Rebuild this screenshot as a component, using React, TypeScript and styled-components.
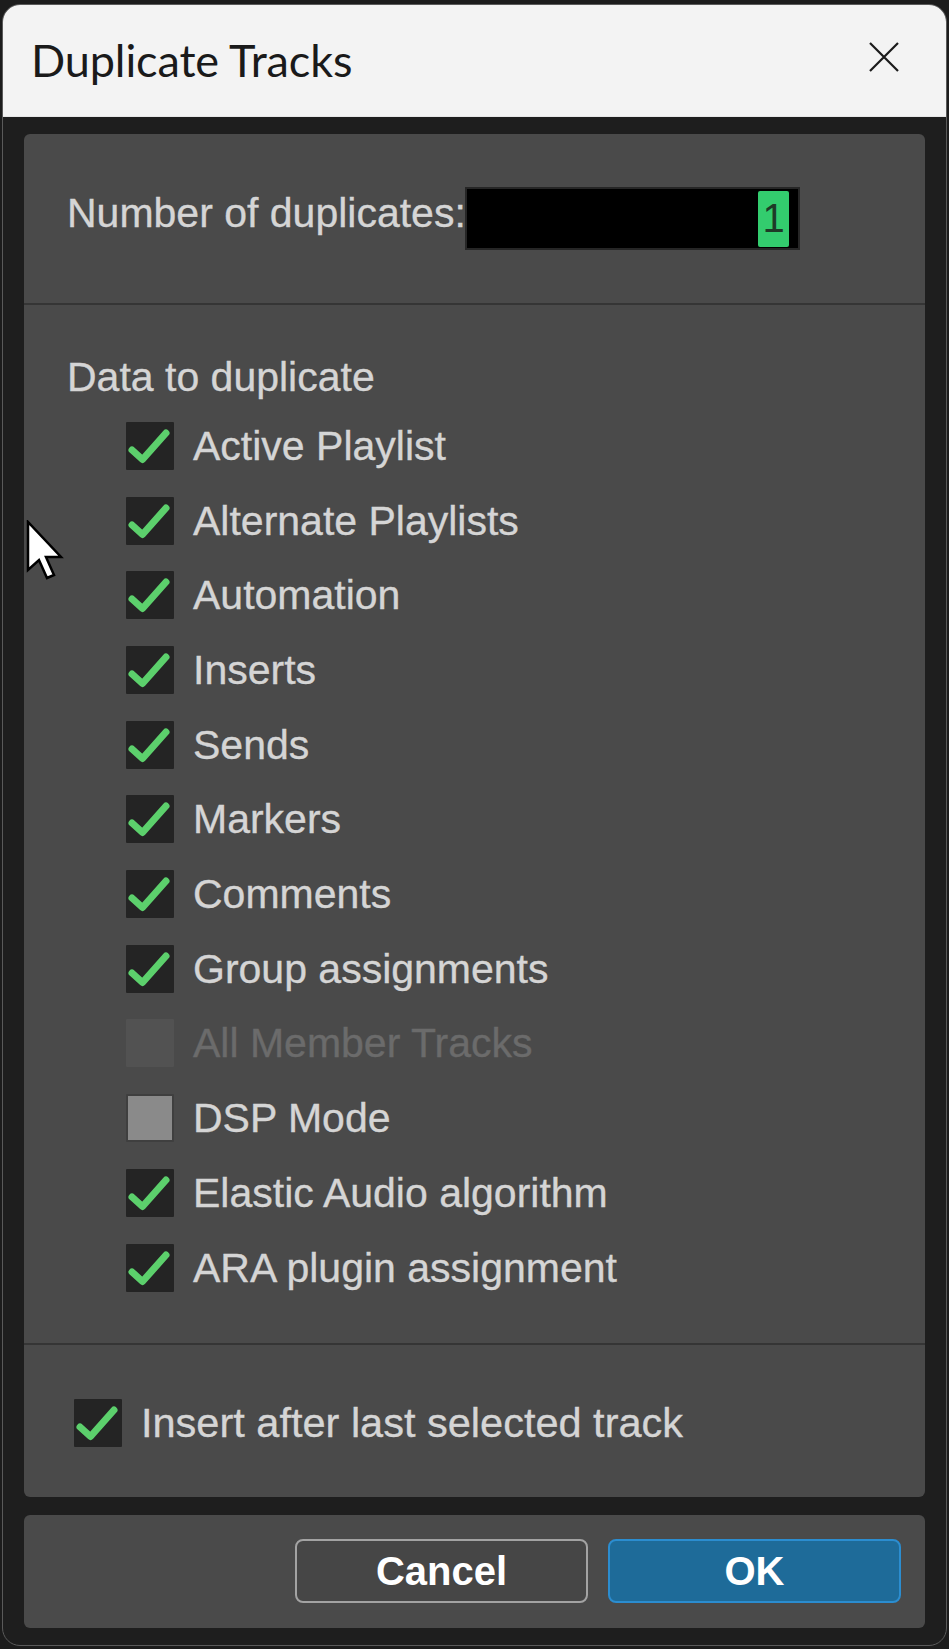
import React from "react";
import styled, { createGlobalStyle } from "styled-components";

const Global = createGlobalStyle`
  html, body { margin: 0; padding: 0; background: #1c1c1c; }
  body { width: 949px; height: 1649px; overflow: hidden; }
  #root { width: 949px; }
`;

const Window = styled.div`
  position: relative;
  margin: 4px 0 0 2px;
  width: 943px;
  border: 1px solid #5a5a5a;
  border-radius: 18px;
  overflow: hidden;
  background: #1e1e1e;
  font-family: "Liberation Sans", Arial, sans-serif;
`;

const TitleBar = styled.div`
  height: 112px;
  background: #f3f3f3;
  display: flex;
  align-items: center;
  justify-content: space-between;
  padding: 0 47px 0 28px;
  border-bottom: 1px solid #e6e6e6;
  box-sizing: border-box;
`;

const Title = styled.div`
  font-family: Lato, "Noto Sans", sans-serif;
  font-size: 45px;
  color: #1a1a1a;
  letter-spacing: -0.1px;
  margin-bottom: 2px;
`;

const CloseButton = styled.div`
  width: 30px;
  height: 30px;
  margin-bottom: 8px;
  display: flex;
`;

const Content = styled.div`
  padding: 17px 21px 17px 21px;
  display: flex;
  flex-direction: column;
  gap: 18px;
`;

const Panel = styled.div`
  background: #4a4a4a;
  border-radius: 6px;
  display: flex;
  flex-direction: column;
  overflow: hidden;
`;

const Section = styled.div<{ $h?: number }>`
  ${(p) => (p.$h ? `height: ${p.$h}px;` : "")}
  box-sizing: border-box;
  & + & { border-top: 2px solid #353535; }
`;

const NumberSection = styled(Section)`
  display: flex;
  align-items: center;
  padding-left: 43px;
`;

const Label = styled.span<{ $size?: number; $disabled?: boolean }>`
  font-size: ${(p) => p.$size ?? 41}px;
  line-height: 46px;
  color: ${(p) => (p.$disabled ? "#6b6b6b" : "#d5d5d5")};
  -webkit-text-stroke: 0.35px ${(p) => (p.$disabled ? "#6b6b6b" : "#d5d5d5")};
  white-space: nowrap;
`;

const NumberLabel = styled(Label)`
  width: 398px;
  flex: none;
  margin-bottom: 11px;
`;

const NumberInput = styled.div`
  width: 335px;
  height: 63px;
  box-sizing: border-box;
  background: #000;
  border: 2px solid #262626;
  display: flex;
  align-items: center;
  justify-content: flex-end;
  padding-right: 9px;
`;

const NumberCell = styled.span`
  width: 31px;
  height: 56px;
  background: #33cc6e;
  border-radius: 2px;
  display: flex;
  align-items: center;
  justify-content: center;
  font-size: 40px;
  color: #1e3a27;
`;

const DataSection = styled(Section)`
  padding: 49px 0 38px 43px;
`;

const Header = styled(Label)`
  display: block;
  height: 46px;
  margin-bottom: 8.65px;
`;

const List = styled.div`
  display: flex;
  flex-direction: column;
  padding-left: 59px;
`;

const Row = styled.div`
  height: 74.7px;
  display: flex;
  align-items: center;
  gap: 19px;
`;

const Box = styled.span<{ $state: "checked" | "disabled" | "unchecked" }>`
  width: 48px;
  height: 48px;
  box-sizing: border-box;
  flex: none;
  display: flex;
  background: ${(p) =>
    p.$state === "checked" ? "#242424" : p.$state === "disabled" ? "#525252" : "#8a8a8a"};
  border: ${(p) => (p.$state === "unchecked" ? "2px solid #3f3f3f" : "none")};
  border-radius: 1px;
`;

const InsertSection = styled(Section)`
  display: flex;
  align-items: center;
  padding: 4px 0 0 50px;
  gap: 19px;
`;

const ButtonPanel = styled(Panel)`
  height: 113px;
  flex-direction: row;
  align-items: center;
  justify-content: flex-end;
  gap: 20px;
  padding-right: 24px;
  box-sizing: border-box;
`;

const Button = styled.div<{ $primary?: boolean }>`
  width: 293px;
  height: 64px;
  box-sizing: border-box;
  border-radius: 8px;
  display: flex;
  align-items: center;
  justify-content: center;
  font-size: 40px;
  font-weight: bold;
  color: #ffffff;
  background: ${(p) => (p.$primary ? "#1e6b99" : "#464646")};
  border: 2px solid ${(p) => (p.$primary ? "#2b8dd0" : "#a3a3a3")};
`;

const Cursor = styled.svg`
  position: absolute;
  left: 23px;
  top: 515px;
`;

const Check = () => (
  <svg width="48" height="48" viewBox="0 0 48 48">
    <polyline
      points="6,28 16.5,37.5 40,11"
      fill="none"
      stroke="#5cd06c"
      strokeWidth="7"
      strokeLinecap="round"
      strokeLinejoin="round"
    />
  </svg>
);

const CheckBox = ({ state }: { state: "checked" | "disabled" | "unchecked" }) => (
  <Box $state={state}>{state === "checked" ? <Check /> : null}</Box>
);

const items: { label: string; state: "checked" | "disabled" | "unchecked" }[] = [
  { label: "Active Playlist", state: "checked" },
  { label: "Alternate Playlists", state: "checked" },
  { label: "Automation", state: "checked" },
  { label: "Inserts", state: "checked" },
  { label: "Sends", state: "checked" },
  { label: "Markers", state: "checked" },
  { label: "Comments", state: "checked" },
  { label: "Group assignments", state: "checked" },
  { label: "All Member Tracks", state: "disabled" },
  { label: "DSP Mode", state: "unchecked" },
  { label: "Elastic Audio algorithm", state: "checked" },
  { label: "ARA plugin assignment", state: "checked" },
];

export default function App() {
  return (
    <>
      <Global />
      <Window>
        <TitleBar>
          <Title>Duplicate Tracks</Title>
          <CloseButton>
            <svg width="30" height="30" viewBox="0 0 30 30">
              <path d="M1 1 L29 29 M29 1 L1 29" stroke="#1a1a1a" strokeWidth="2.2" fill="none" />
            </svg>
          </CloseButton>
        </TitleBar>
        <Content>
          <Panel>
            <NumberSection $h={169}>
              <NumberLabel>Number of duplicates:</NumberLabel>
              <NumberInput>
                <NumberCell>1</NumberCell>
              </NumberInput>
            </NumberSection>
            <DataSection>
              <Header>Data to duplicate</Header>
              <List>
                {items.map((it) => (
                  <Row key={it.label}>
                    <CheckBox state={it.state} />
                    <Label $disabled={it.state === "disabled"}>{it.label}</Label>
                  </Row>
                ))}
              </List>
            </DataSection>
            <InsertSection $h={154}>
              <CheckBox state="checked" />
              <Label $size={41.5}>Insert after last selected track</Label>
            </InsertSection>
          </Panel>
          <ButtonPanel>
            <Button>Cancel</Button>
            <Button $primary>OK</Button>
          </ButtonPanel>
        </Content>
        <Cursor width="40" height="62" viewBox="0 0 40 62">
          <path
            d="M2 2 L2 50 L13 40 L21 58 L28 55 L20 37 L35 37 Z"
            fill="#ffffff"
            stroke="#000000"
            strokeWidth="2.5"
            strokeLinejoin="miter"
          />
        </Cursor>
      </Window>
    </>
  );
}
